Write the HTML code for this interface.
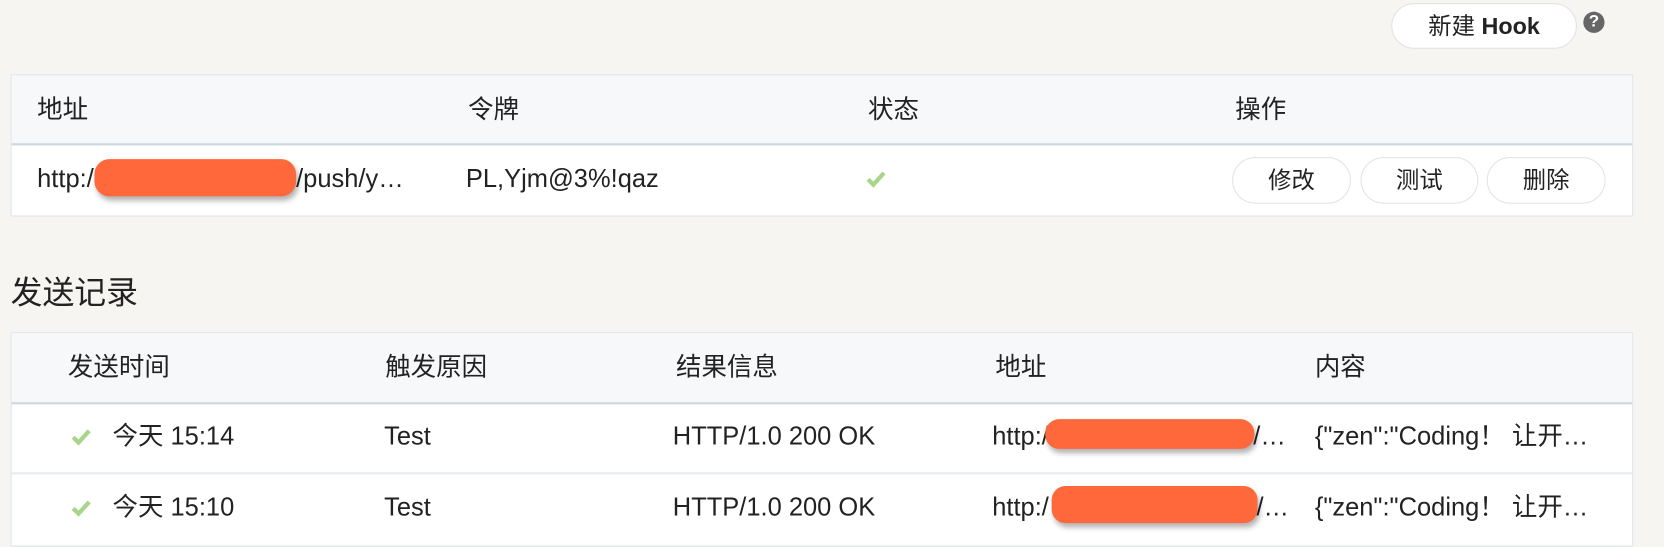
<!DOCTYPE html>
<html><head><meta charset="utf-8"><style>
html,body{margin:0;padding:0;background:#f6f5f2;width:1664px;height:544px;overflow:hidden}
#w{position:absolute;left:0;top:0;width:1568px;height:513px;transform:scale(1.0612);transform-origin:0 0;font-family:"Liberation Sans","Noto Sans CJK SC",sans-serif;color:#222;font-size:24px}
.a{position:absolute;white-space:nowrap;line-height:30px;height:30px}
.box{position:absolute;left:10px;width:1527px;border:1px solid #dde4e8;background:#fff}
.hd{position:absolute;left:0;right:0;top:0;background:#f6f8fa;border-bottom:2px solid #cbd8e0}
.btn{position:absolute;border:1px solid #e3e3e3;border-radius:22px;background:#fff;text-align:center;font-size:22px}
.red{position:absolute;background:#ff683b;border-radius:13px;box-shadow:2px 4px 5px rgba(0,0,0,.3)}
.ck{position:absolute;width:20px;height:30px}
.ln{position:absolute;left:0;right:0;height:2px;background:#e6ebee}
</style></head><body><div id="w">
<div class="btn" style="left:1311px;top:3px;width:173px;height:41px;line-height:41px;font-size:22px">新建 <b>Hook</b></div>
<div class="a" style="left:1492px;top:11px;width:20px;height:20px;border-radius:50%;background:#666;color:#fff;font-size:16px;font-weight:bold;text-align:center;line-height:20px">?</div>

<div class="box" style="top:70px;height:132px">
 <div class="hd" style="height:64px"></div>
 <div class="a" style="left:24px;top:18px">地址</div>
 <div class="a" style="left:430px;top:18px">令牌</div>
 <div class="a" style="left:807px;top:18px">状态</div>
 <div class="a" style="left:1153px;top:18px">操作</div>
 <div class="a" style="left:24px;top:83px">http:/</div>
 <div class="a" style="left:268px;top:83px">/push/y…</div>
 <div class="red" style="left:78px;top:79px;width:190px;height:35px;border-radius:14px"></div>
 <div class="a" style="left:428px;top:83px">PL,Yjm@3%!qaz</div>
 <svg class="ck" style="left:805px;top:83px" viewBox="0 0 20 30"><path d="M2 15 L7 20 L17 9" stroke="#a8d58a" stroke-width="4" fill="none"/></svg>
 <div class="btn" style="left:1150px;top:77px;width:110px;height:42px;line-height:42px">修改</div>
 <div class="btn" style="left:1271px;top:77px;width:109px;height:42px;line-height:42px">测试</div>
 <div class="btn" style="left:1390px;top:77px;width:110px;height:42px;line-height:42px">删除</div>
</div>

<div class="a" style="left:10px;top:259px;font-size:30px;line-height:36px;height:36px">发送记录</div>

<div class="box" style="top:313px;height:200px">
 <div class="hd" style="height:65px"></div>
 <div class="a" style="left:53px;top:18px">发送时间</div>
 <div class="a" style="left:352px;top:18px">触发原因</div>
 <div class="a" style="left:626px;top:18px">结果信息</div>
 <div class="a" style="left:927px;top:18px">地址</div>
 <div class="a" style="left:1228px;top:18px">内容</div>
 <div class="ln" style="top:131px"></div>
 <svg class="ck" style="left:56px;top:83px" viewBox="0 0 20 30"><path d="M2 15 L7 20 L17 9" stroke="#a8d58a" stroke-width="4" fill="none"/></svg>
 <div class="a" style="left:95px;top:83px">今天 15:14</div>
 <div class="a" style="left:351px;top:83px">Test</div>
 <div class="a" style="left:623px;top:83px">HTTP/1.0 200 OK</div>
 <div class="a" style="left:924px;top:83px">http:/</div>
 <div class="a" style="left:1170px;top:83px">/…</div>
 <div class="red" style="left:974px;top:81px;width:197px;height:28px"></div>
 <div class="a" style="left:1228px;top:83px">{"zen":"Coding！&nbsp;让开…</div>
 <svg class="ck" style="left:56px;top:150px" viewBox="0 0 20 30"><path d="M2 15 L7 20 L17 9" stroke="#a8d58a" stroke-width="4" fill="none"/></svg>
 <div class="a" style="left:95px;top:150px">今天 15:10</div>
 <div class="a" style="left:351px;top:150px">Test</div>
 <div class="a" style="left:623px;top:150px">HTTP/1.0 200 OK</div>
 <div class="a" style="left:924px;top:150px">http:/</div>
 <div class="a" style="left:1173px;top:150px">/…</div>
 <div class="red" style="left:980px;top:144px;width:194px;height:35px"></div>
 <div class="a" style="left:1228px;top:150px">{"zen":"Coding！&nbsp;让开…</div>
</div>
</div></body></html>
